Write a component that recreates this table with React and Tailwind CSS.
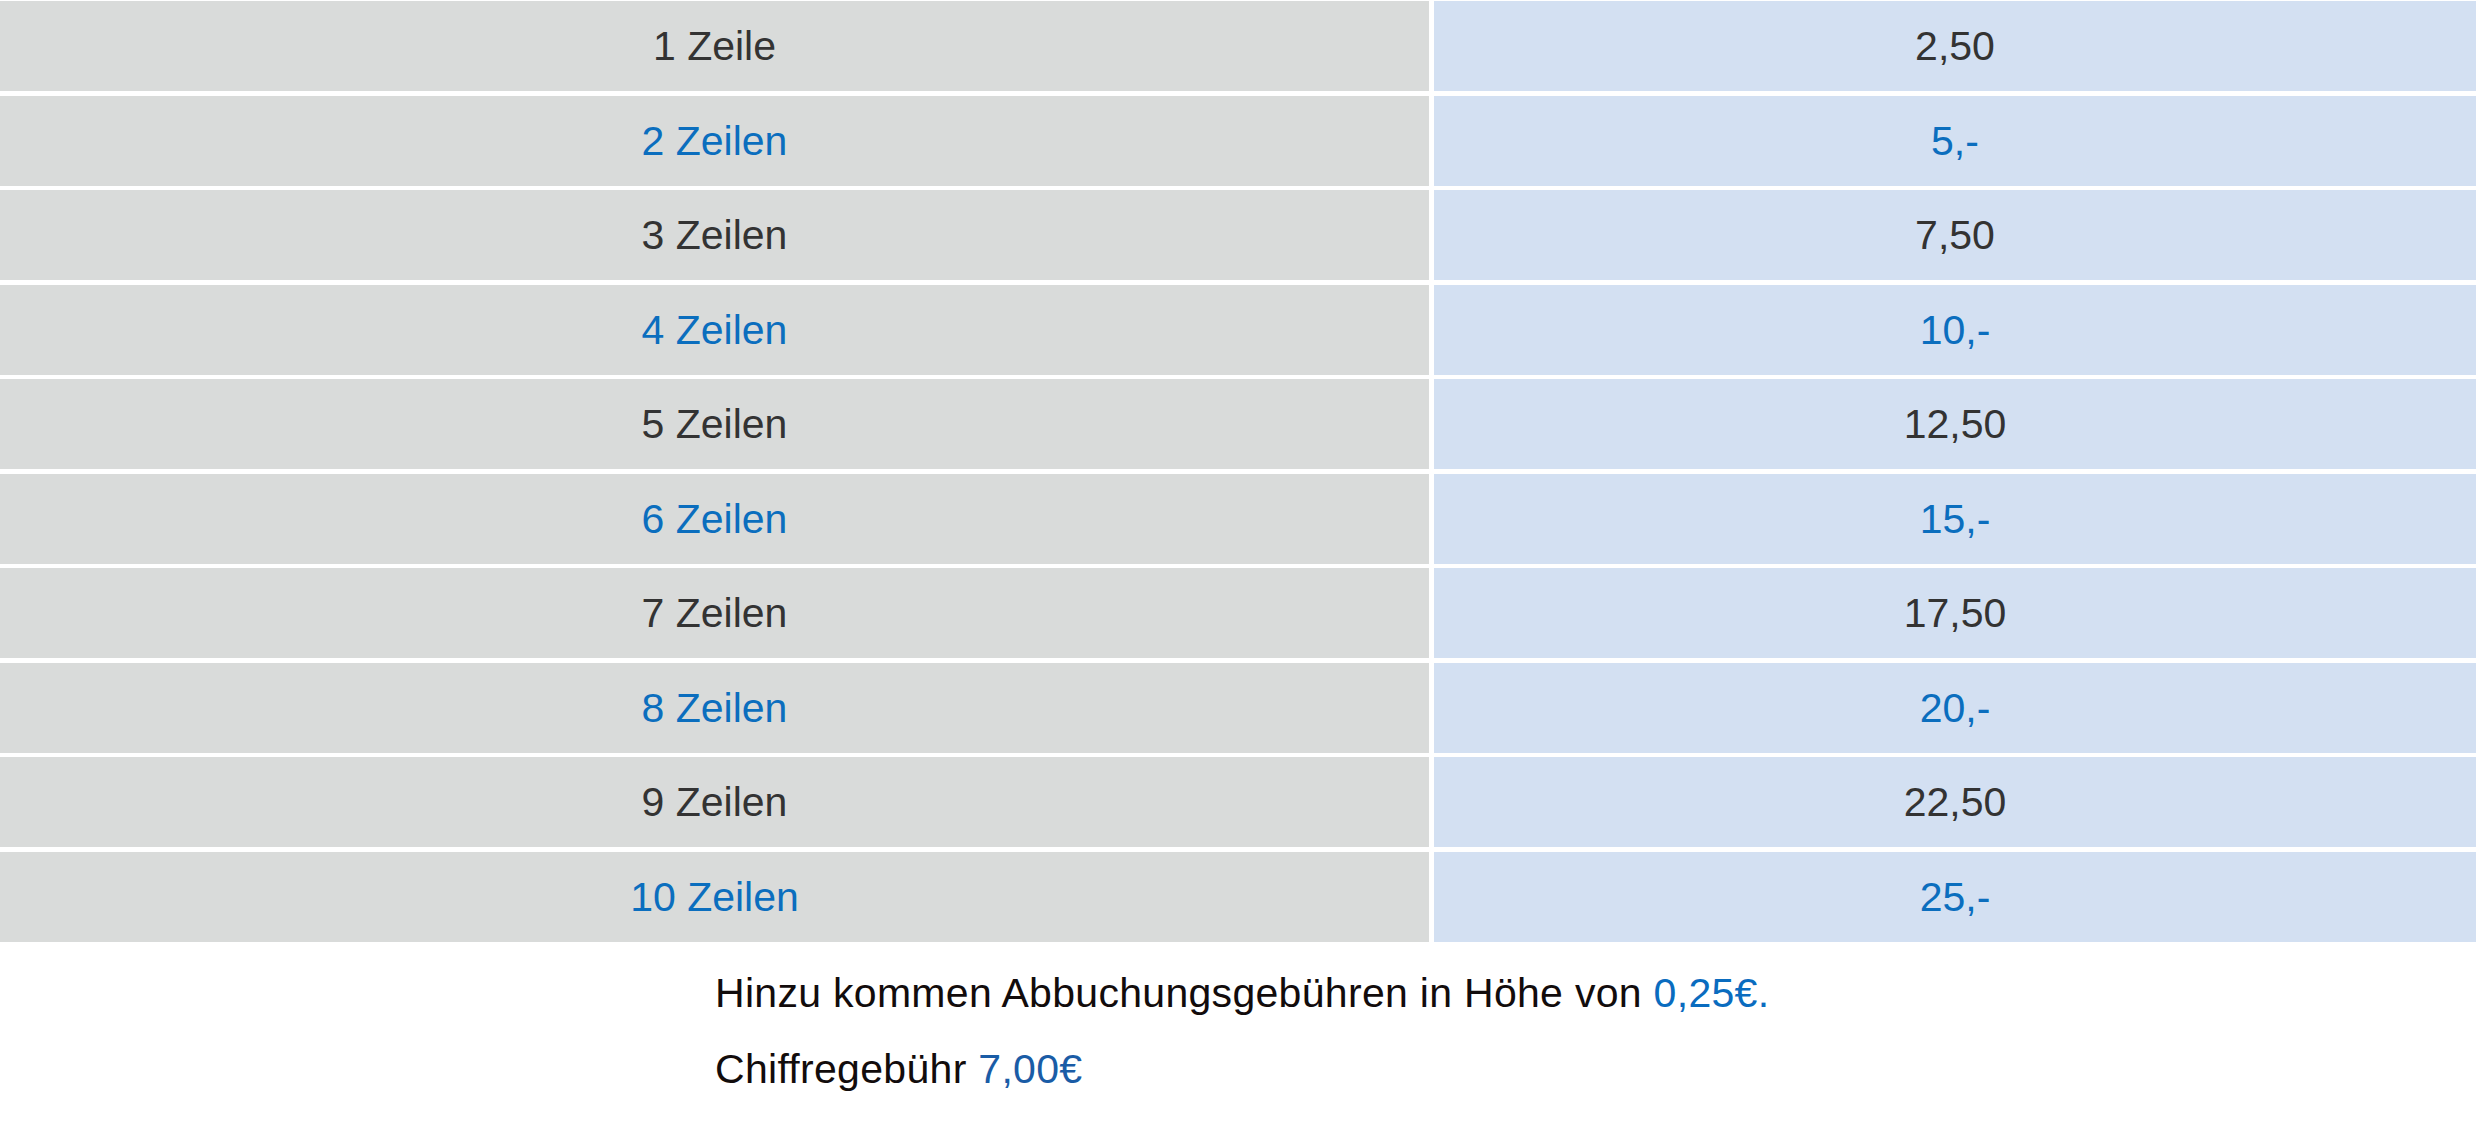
const rows = [
  { label: "1 Zeile", price: "2,50" },
  { label: "2 Zeilen", price: "5,-" },
  { label: "3 Zeilen", price: "7,50" },
  { label: "4 Zeilen", price: "10,-" },
  { label: "5 Zeilen", price: "12,50" },
  { label: "6 Zeilen", price: "15,-" },
  { label: "7 Zeilen", price: "17,50" },
  { label: "8 Zeilen", price: "20,-" },
  { label: "9 Zeilen", price: "22,50" },
  { label: "10 Zeilen", price: "25,-" },
];

export default function App() {
  return (
    <div className="w-[2480px] h-[1122px] bg-white font-['Liberation_Sans',Arial,sans-serif] text-[41px] overflow-hidden">
      {/* price table */}
      <div className="pt-px pr-[4px] grid grid-cols-[1429px_1fr] gap-x-[5px] gap-y-[4.5px]">
        {rows.map((row, i) => {
          const color = i % 2 === 1 ? "text-[#0b6ebe]" : "text-[#333333]";
          return [
            <div
              key={row.label}
              className={`h-[90px] pt-[2px] flex items-center justify-center bg-[#d9dbda] ${color}`}
            >
              {row.label}
            </div>,
            <div
              key={row.price}
              className={`h-[90px] pt-[2px] flex items-center justify-center bg-[#d3e0f2] ${color}`}
            >
              {row.price}
            </div>,
          ];
        })}
      </div>

      {/* notes */}
      <div className="mt-[13px] pl-[715px] leading-[76px] tracking-[0.3px] text-[#120c0c]">
        <p>
          Hinzu kommen Abbuchungsgebühren in Höhe von <span className="text-[#0a6cbf]">0,25€.</span>
        </p>
        <p>
          Chiffregebühr <span className="text-[#1a5ca6]">7,00€</span>
        </p>
      </div>
    </div>
  );
}
